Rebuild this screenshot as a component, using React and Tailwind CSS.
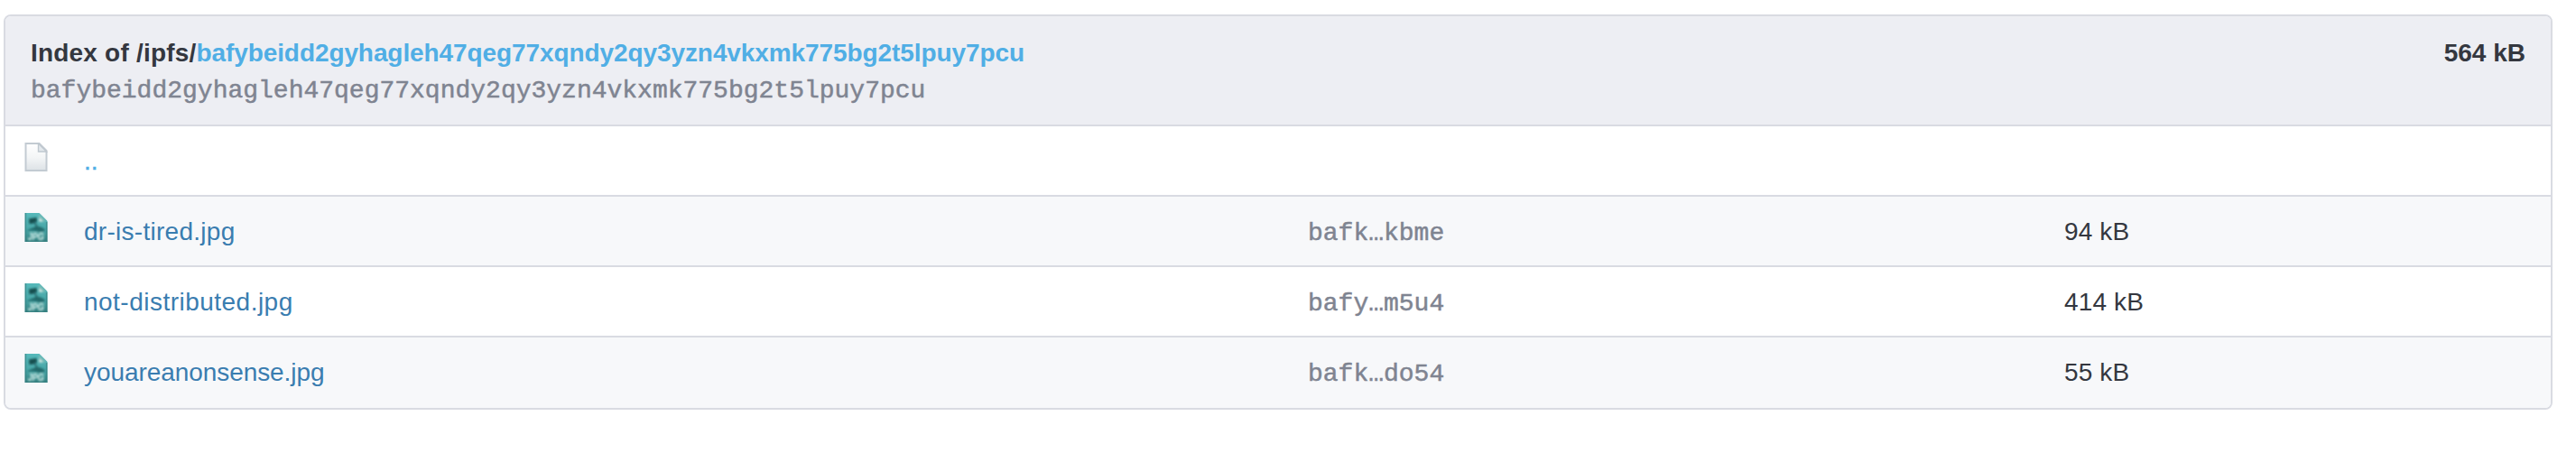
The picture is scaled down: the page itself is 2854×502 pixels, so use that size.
const CID = "bafybeidd2gyhagleh47qeg77xqndy2qy3yzn4vkxmk775bg2t5lpuy7pcu";

const FILES = [
  { name: "dr-is-tired.jpg", hash: "bafk…kbme", size: "94 kB", track: "tracking-[0.28px]" },
  { name: "not-distributed.jpg", hash: "bafy…m5u4", size: "414 kB", track: "tracking-[0.48px]" },
  { name: "youareanonsense.jpg", hash: "bafk…do54", size: "55 kB", track: "tracking-[-0.07px]" },
];

function BlankIcon() {
  return (
    <svg className="size-8 shrink-0" viewBox="0 0 32 32" aria-hidden="true">
      <defs>
        <linearGradient id="paper" x1="0" y1="0" x2="0" y2="1">
          <stop offset="0" stopColor="#ffffff" />
          <stop offset="0.5" stopColor="#f4f6f7" />
          <stop offset="1" stopColor="#dde2e6" />
        </linearGradient>
      </defs>
      <path d="M4.5 1h15l8 8v22h-23z" fill="url(#paper)" stroke="#c3cbd2" strokeWidth="2" />
      <path d="M18.5 1v9h9z" fill="#e3e8ec" stroke="#bfc8cf" strokeWidth="1.4" />
    </svg>
  );
}

function JpgIcon() {
  return (
    <svg className="size-8 shrink-0" viewBox="0 0 32 32" aria-hidden="true">
      <defs>
        <linearGradient id="teal" x1="0" y1="0" x2="0" y2="1">
          <stop offset="0" stopColor="#55b9ba" />
          <stop offset="0.6" stopColor="#48a5a5" />
          <stop offset="1" stopColor="#34807f" />
        </linearGradient>
        <filter id="soft" x="-20%" y="-20%" width="140%" height="140%">
          <feGaussianBlur stdDeviation="0.8" />
        </filter>
      </defs>
      <path d="M3.6 0h15.9l9 9v23H3.6z" fill="url(#teal)" />
      <path d="M4.400 0v32M27.700 10v22M3.600 31.200h25" stroke="#357f80" strokeWidth="1.500" opacity="0.65" />
      <g filter="url(#soft)">
        <path d="M19 1v8.500h8.500z" fill="#7fbdb8" />
        <path d="M19.500 5.500v4h4z" fill="#e6f3ee" />
        <path d="M8 6.500l8.500-1.500 .500 4.500-3 2-5.500.500z" fill="#174f50" />
        <path d="M14 10l3.500 6" stroke="#2b7072" strokeWidth="2" />
        <path d="M5 19.500l7-2.700 4-2 5 .7 4.500 2.500v2l-6 .800-5-1.300z" fill="#24696a" />
        <text
          x="15.700"
          y="30"
          textAnchor="middle"
          textLength="18"
          lengthAdjust="spacingAndGlyphs"
          className="font-['Liberation_Sans'] text-[10px] font-bold italic"
          fill="#d6efeb"
        >
          JPG
        </text>
      </g>
    </svg>
  );
}

function Row({ icon, children, striped, last }) {
  return (
    <div
      className={`grid h-[78px] grid-cols-[87px_1356px_838px_1fr] ${last ? "" : "border-b-2 border-[#d9dbe2]"} ${striped ? "bg-[#f7f8fa]" : "bg-white"}`}
    >
      <div className="pt-[18px] pl-[18px]">{icon}</div>
      {children}
    </div>
  );
}

export default function App() {
  return (
    <main className="h-[502px] bg-white pt-4 pr-[26px] pl-1 font-['Liberation_Sans',Arial,sans-serif] text-[28px] leading-[40px] text-[#34373f]">
      <section className="h-[438px] overflow-hidden rounded-lg border-2 border-[#d9dbe2]">
        <header className="flex h-[122px] justify-between border-b-2 border-[#d9dbe2] bg-[#edeef3] px-7 pt-[21px] font-bold">
          <div>
            <h1 className="whitespace-nowrap">
              <span className="tracking-[0.2px]">Index of /ipfs/</span>
              <a className="tracking-[-0.09px] text-[#50aee5]">{CID}</a>
            </h1>
            <p className="pt-0.5 font-['Liberation_Mono',monospace] font-normal text-[#7f8491] [-webkit-text-stroke:0.5px_#7f8491]">
              {CID}
            </p>
          </div>
          <span>564 kB</span>
        </header>
        <Row icon={<BlankIcon />}>
          <a className="pt-[19px] text-[#50aee5] [-webkit-text-stroke:0.4px_#50aee5]">..</a>
        </Row>
        {FILES.map((file, i) => (
          <Row key={file.name} icon={<JpgIcon />} striped={i % 2 === 0} last={i === FILES.length - 1}>
            <a className={`pt-[19px] text-[#3a7db0] ${file.track}`}>{file.name}</a>
            <span className="pt-[21px] font-['Liberation_Mono',monospace] text-[#7f8491] [-webkit-text-stroke:0.5px_#7f8491]">
              {file.hash}
            </span>
            <span className="pt-[19px] tracking-[0.15px]">{file.size}</span>
          </Row>
        ))}
      </section>
    </main>
  );
}
